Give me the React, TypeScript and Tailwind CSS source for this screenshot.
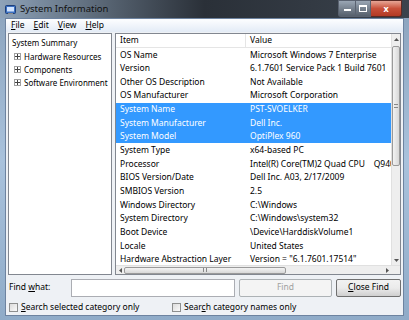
import React from "react";

const rows = [
  { item: "OS Name", value: "Microsoft Windows 7 Enterprise" },
  { item: "Version", value: "6.1.7601 Service Pack 1 Build 7601" },
  { item: "Other OS Description", value: "Not Available" },
  { item: "OS Manufacturer", value: "Microsoft Corporation" },
  { item: "System Name", value: "PST-SVOELKER", sel: true },
  { item: "System Manufacturer", value: "Dell Inc.", sel: true },
  { item: "System Model", value: "OptiPlex 960", sel: true },
  { item: "System Type", value: "x64-based PC" },
  { item: "Processor", value: "Intel(R) Core(TM)2 Quad CPU    Q9400" },
  { item: "BIOS Version/Date", value: "Dell Inc. A03, 2/17/2009" },
  { item: "SMBIOS Version", value: "2.5" },
  { item: "Windows Directory", value: "C:\\Windows" },
  { item: "System Directory", value: "C:\\Windows\\system32" },
  { item: "Boot Device", value: "\\Device\\HarddiskVolume1" },
  { item: "Locale", value: "United States" },
  { item: "Hardware Abstraction Layer", value: 'Version = "6.1.7601.17514"' },
];

const tree = ["Hardware Resources", "Components", "Software Environment"];

function Plus() {
  return (
    <span className="w-[7px] h-[7px] border border-[#a0a0a0] bg-white flex items-center justify-center shrink-0">
      <svg width="5" height="5" viewBox="0 0 5 5">
        <path d="M0 2.5h5M2.5 0v5" stroke="#444" strokeWidth="1" />
      </svg>
    </span>
  );
}

function Check() {
  return (
    <span className="w-[9px] h-[9px] border border-[#8e8f8f] bg-gradient-to-br from-[#dcdcdc] to-[#fafafa] shrink-0" />
  );
}

export default function App() {
  return (
    <div className="w-[409px] h-[320px] flex flex-col overflow-hidden bg-gradient-to-b from-[#8aa2bc] via-[#a9c2dc] to-[#8fabc8] font-['Noto_Sans',sans-serif] text-[8.5px] text-black leading-none">
      {/* title bar */}
      <div className="h-[18px] flex items-center bg-gradient-to-r from-[#8ea3b9] via-[#2a3038] to-[#3b434d] shrink-0">
        <div className="flex items-center gap-[4px] pl-[5px] flex-1">
          <svg width="11" height="11" viewBox="0 0 11 11">
            <rect x="0.5" y="1.5" width="10" height="8" rx="1" fill="#3a6fc0" stroke="#1d3f7a" />
            <rect x="2" y="3" width="7" height="4.5" fill="#cfe3ff" />
            <path d="M3 9.5h5" stroke="#888" />
          </svg>
          <span className="text-[9.5px] text-[#111]">System Information</span>
        </div>
        <div className="flex h-[17px] self-start mr-[7px]">
          <div className="w-[17px] border border-[#5a6270] border-r-0 rounded-bl-[3px] bg-gradient-to-b from-[#9aa6b4] to-[#56606c] flex items-end justify-center pb-[5px]">
            <span className="w-[7px] h-[2px] bg-white" />
          </div>
          <div className="w-[16px] border border-[#5a6270] bg-gradient-to-b from-[#9aa6b4] to-[#56606c] flex items-center justify-center">
            <span className="w-[8px] h-[7px] border border-white border-t-2" />
          </div>
          <div className="w-[31px] border border-[#5a2a25] border-l-0 rounded-br-[3px] bg-gradient-to-b from-[#e6a596] via-[#c8503a] to-[#b23a24] flex items-center justify-center">
            <span className="text-white font-bold text-[9px]">x</span>
          </div>
        </div>
      </div>

      <div className="flex-1 flex flex-col mx-[5px] mb-[4px] border border-[#6d83a0]">
        {/* menu */}
        <div className="h-[13px] flex items-center gap-[9px] pl-[5px] bg-gradient-to-b from-[#fdfeff] to-[#e3ebf6] shrink-0">
          <span><u>F</u>ile</span>
          <span><u>E</u>dit</span>
          <span><u>V</u>iew</span>
          <span><u>H</u>elp</span>
        </div>

        <div className="flex-1 flex flex-col bg-[#eef1f5] px-[2px] pt-[1px]">
          <div className="flex gap-[3px] h-[242px]">
            {/* left tree */}
            <div className="w-[104px] shrink-0 bg-white border border-[#828790] pt-[5px] pl-[3px] flex flex-col gap-[4px] whitespace-nowrap overflow-hidden text-[8px]">
              <div className="h-[9px]">System Summary</div>
              {tree.map((t) => (
                <div key={t} className="flex items-center gap-[3px] pl-[2px] h-[9px]">
                  <Plus />
                  <span>{t}</span>
                </div>
              ))}
            </div>

            {/* right list */}
            <div className="flex-1 min-w-0 bg-white border border-[#828790] flex flex-col">
              <div className="flex flex-1 min-h-0">
                <div className="flex-1 min-w-0 flex flex-col overflow-hidden">
                  <div className="h-[14px] flex items-center shrink-0 border-b border-[#e5e5e5] bg-white">
                    <div className="w-[130px] shrink-0 pl-[4px] border-r border-[#e5e5e5] h-full flex items-center">Item</div>
                    <div className="pl-[4px]">Value</div>
                  </div>
                  {rows.map((r) => (
                    <div
                      key={r.item}
                      className={`h-[13.65px] flex items-center shrink-0 whitespace-nowrap ${
                        r.sel ? "bg-[#3399ff] text-white" : ""
                      }`}
                    >
                      <div className="w-[130px] shrink-0 pl-[4px]">{r.item}</div>
                      <div className="pl-[4px] whitespace-pre">{r.value}</div>
                    </div>
                  ))}
                </div>
                {/* vertical scrollbar */}
                <div className="w-[9px] bg-[#eeeeee] border-l border-[#e0e0e0] flex flex-col items-center shrink-0">
                  <div className="h-[10px] flex items-center justify-center">
                    <svg width="5" height="3" viewBox="0 0 5 3"><path d="M0 3L2.5 0L5 3Z" fill="#555" /></svg>
                  </div>
                  <div className="w-[8px] h-[120px] mt-[2px] rounded-[2px] border border-[#9a9a9a] bg-gradient-to-r from-[#f3f3f3] to-[#d8d8d8] flex items-center justify-center">
                    <span className="w-[4px] h-[4px] border-y border-[#888]" />
                  </div>
                  <div className="flex-1" />
                  <div className="h-[10px] flex items-center justify-center">
                    <svg width="5" height="3" viewBox="0 0 5 3"><path d="M0 0L2.5 3L5 0Z" fill="#555" /></svg>
                  </div>
                </div>
              </div>
              {/* horizontal scrollbar */}
              <div className="h-[9px] flex items-center bg-[#eeeeee] border-t border-[#e0e0e0] shrink-0 pr-[9px]">
                <div className="w-[8px] flex justify-center">
                  <svg width="3" height="5" viewBox="0 0 3 5"><path d="M3 0L0 2.5L3 5Z" fill="#555" /></svg>
                </div>
                <div className="w-[162px] h-[7px] rounded-[2px] border border-[#9a9a9a] bg-gradient-to-b from-[#f3f3f3] to-[#d8d8d8] flex justify-center items-center">
                  <span className="w-[4px] h-[4px] border-x border-[#888]" />
                </div>
                <div className="flex-1" />
                <div className="w-[8px] flex justify-center">
                  <svg width="3" height="5" viewBox="0 0 3 5"><path d="M0 0L3 2.5L0 5Z" fill="#555" /></svg>
                </div>
              </div>
            </div>
          </div>

          {/* find bar */}
          <div className="flex-1 flex flex-col justify-center gap-[6px] pl-[1px]">
            <div className="flex items-center">
              <span className="w-[62px]">Find <u>w</u>hat:</span>
              <div className="w-[164px] h-[18px] bg-white border border-[#abadb3]" />
              <div className="w-[93px] h-[18px] ml-[4px] border border-[#adb2b5] bg-[#f4f4f4] rounded-[2px] flex items-center justify-center text-[#a0a0a0]">
                Find
              </div>
              <div className="flex-1 h-[18px] ml-[4px] border border-[#707070] rounded-[2px] bg-gradient-to-b from-[#f2f2f2] via-[#ebebeb] to-[#cfcfcf] flex items-center justify-center">
                <span><u>C</u>lose Find</span>
              </div>
            </div>
            <div className="flex items-center">
              <div className="w-[163px] flex items-center gap-[3px]">
                <Check />
                <span><u>S</u>earch selected category only</span>
              </div>
              <div className="flex items-center gap-[3px]">
                <Check />
                <span>Sear<u>c</u>h category names only</span>
              </div>
            </div>
          </div>
        </div>
      </div>
    </div>
  );
}
